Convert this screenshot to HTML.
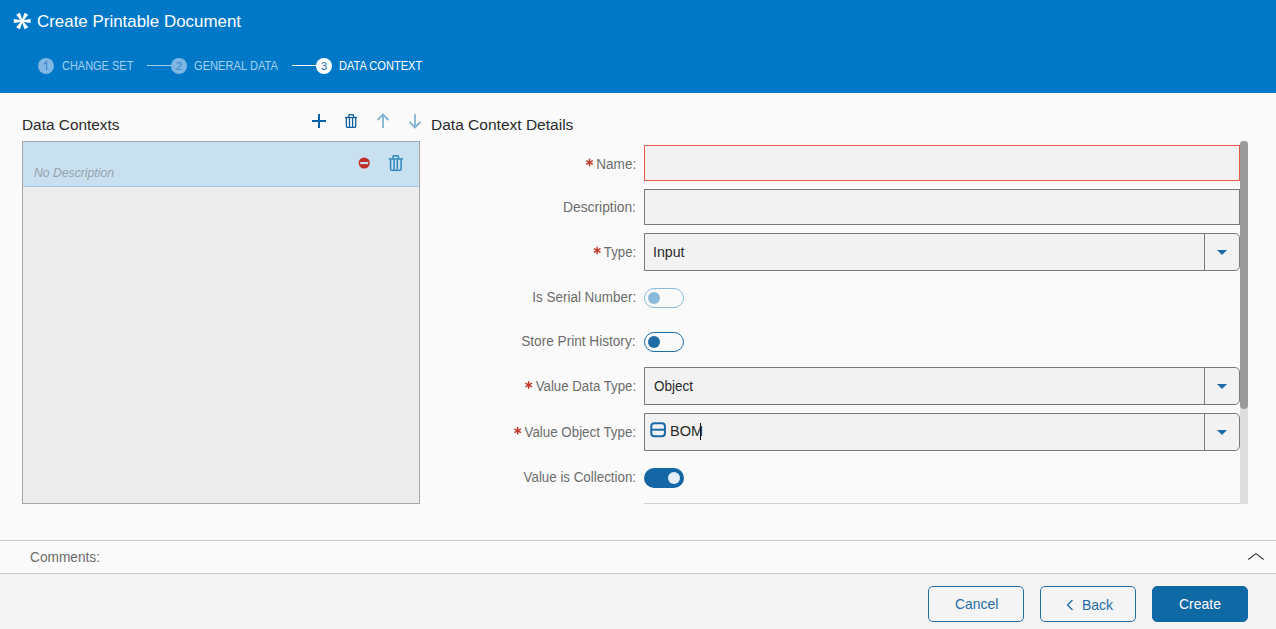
<!DOCTYPE html>
<html><head><meta charset="utf-8">
<style>
*{box-sizing:border-box;margin:0;padding:0}
html,body{width:1276px;height:629px;overflow:hidden;background:#fafafa;font-family:"Liberation Sans",sans-serif}
body{position:relative}
.a{position:absolute}
.t{position:absolute;line-height:1;white-space:nowrap}
.inp{position:absolute;left:644px;width:596px;background:#f2f2f2;border:1px solid #7a7a7a}
.sel{border-radius:0 5px 5px 0}
.ddb{position:absolute;right:0;top:0;bottom:0;width:35px;border-left:1px solid #7a7a7a}
.ddb:after{content:"";position:absolute;left:12px;top:50%;margin-top:-2px;border-left:5px solid transparent;border-right:5px solid transparent;border-top:5px solid #1a6aa8}
.tog{position:absolute;left:644px;width:40px;height:20px;border-radius:10px}
.knob{position:absolute;width:12px;height:12px;border-radius:50%;top:3px}
.btn{position:absolute;top:586px;width:96px;height:36px;border:1px solid #1f6ca6;border-radius:5px}
</style></head><body>
<div class="a" style="left:0;top:0;width:1276px;height:93px;background:#0078c8"></div>
<svg class="a" style="left:0;top:0" width="40" height="40" viewBox="0 0 40 40" fill="#fff">
<polygon points="30.60,23.10 22.20,21.65 13.80,23.10 13.80,18.90 22.20,20.35 30.60,18.90"/>
<polygon points="24.58,29.32 21.64,21.32 16.18,14.78 19.82,12.68 22.76,20.68 28.22,27.22"/>
<polygon points="16.18,27.22 21.64,20.68 24.58,12.68 28.22,14.78 22.76,21.32 19.82,29.32"/>
</svg>
<!-- step indicators -->
<svg class="a" style="left:0;top:50px" width="440" height="30" viewBox="0 50 440 30">
<circle cx="46" cy="66" r="8" fill="#7fb6e3"/>
<line x1="147" y1="65.5" x2="172" y2="65.5" stroke="#a8d0f0" stroke-width="1"/>
<circle cx="179" cy="66" r="8" fill="#7fb6e3"/>
<line x1="292" y1="65.5" x2="317" y2="65.5" stroke="#fff" stroke-width="1"/>
<circle cx="324" cy="66" r="8" fill="#fff"/>
<path d="M46.6 70 V62 L43.9 64.2" fill="none" stroke="#3a87c8" stroke-width="1.1"/>
<text x="179" y="70" font-family="Liberation Sans" font-size="11" fill="#3a87c8" text-anchor="middle">2</text>
<text x="324" y="70" font-family="Liberation Sans" font-size="11" fill="#0a6ab8" text-anchor="middle">3</text>
</svg>

<!-- left list -->
<div class="a" style="left:22px;top:141px;width:398px;height:363px;background:#ececec;border:1px solid #a6a6a6"></div>
<div class="a" style="left:23px;top:142px;width:396px;height:45px;background:#c9e0f0;border-bottom:1px solid #a9c7dc"></div>

<!-- toolbar icons -->
<svg class="a" style="left:300px;top:105px" width="130" height="80" viewBox="300 105 130 80">
<g fill="none" stroke="#0a60a6" stroke-width="2">
<line x1="312" y1="121" x2="326" y2="121"/>
<line x1="319" y1="114" x2="319" y2="128"/>
</g>
<g fill="none" stroke="#0f5fa0" stroke-width="1.3">
<path d="M348.4 117.2 L349.2 114.7 H353.1 L353.9 117.2"/>
<line x1="345" y1="117.5" x2="357" y2="117.5"/>
<path d="M346.4 118 V126.2 Q346.4 127.4 347.6 127.4 H354.5 Q355.7 127.4 355.7 126.2 V118"/>
<line x1="349.5" y1="118" x2="349.5" y2="127"/>
<line x1="352.6" y1="118" x2="352.6" y2="127"/>
</g>
<g fill="none" stroke="#82b2d3" stroke-width="1.8">
<path d="M377.6 120 L383 114.6 L388.4 120"/>
<line x1="383" y1="115" x2="383" y2="128"/>
<path d="M409.6 122 L415 127.4 L420.4 122"/>
<line x1="415" y1="114" x2="415" y2="127"/>
</g>
<circle cx="364.2" cy="163" r="5.6" fill="#c0302a"/>
<rect x="360.2" y="162" width="8" height="2.1" fill="#c9e0f0"/>
<g fill="none" stroke="#3086bf" stroke-width="1.5">
<path d="M392.6 158.6 L393.5 155.8 H397.9 L398.8 158.6"/>
<line x1="388.8" y1="159" x2="403.1" y2="159"/>
<path d="M390.6 159.5 V169 Q390.6 170.2 391.8 170.2 H399.9 Q401.1 170.2 401.1 169 V159.5"/>
<line x1="394.1" y1="159.6" x2="394.1" y2="169.4"/>
<line x1="397.3" y1="159.6" x2="397.3" y2="169.4"/>
</g>
</svg>

<!-- form -->
<div class="inp" style="top:145px;height:36px;border-color:#e8594c"></div>
<div class="inp" style="top:189px;height:36px"></div>
<div class="inp sel" style="top:233px;height:38px"><div class="ddb"></div></div>
<div class="tog" style="top:288px;border:1px solid #8dbad9"><div class="knob" style="left:3px;top:3px;background:#8cb9d7"></div></div>
<div class="tog" style="top:332px;border:1px solid #1f6ca6"><div class="knob" style="left:3px;top:3px;background:#1f6ca6"></div></div>
<div class="inp sel" style="top:367px;height:38px"><div class="ddb"></div></div>
<div class="inp sel" style="top:413px;height:38px"><div class="ddb"></div></div>
<svg class="a" style="left:648px;top:420px" width="20" height="20" viewBox="648 420 20 20">
<rect x="651.3" y="423.2" width="13.6" height="13" rx="3" fill="none" stroke="#1a6aa8" stroke-width="2"/>
<line x1="651.3" y1="429.7" x2="664.9" y2="429.7" stroke="#1a6aa8" stroke-width="2"/>
</svg>
<div class="a" style="left:700px;top:423px;width:1px;height:17px;background:#111"></div>
<div class="tog" style="top:468px;background:#1466a4"><div class="knob" style="left:24px;top:4px;background:#e4eef6"></div></div>
<div class="a" style="left:644px;top:503px;width:596px;height:1px;background:#cfcfcf"></div>
<div class="a" style="left:1240px;top:141px;width:8px;height:363px;background:#dedede"></div>
<div class="a" style="left:1240px;top:141px;width:8px;height:268px;background:#9a9a9a;border-radius:4px"></div>

<!-- comments -->
<div class="a" style="left:0;top:540px;width:1276px;height:1px;background:#cdcdcd"></div>
<div class="a" style="left:0;top:573px;width:1276px;height:1px;background:#c9c9c9"></div>
<svg class="a" style="left:1240px;top:545px" width="30" height="25" viewBox="1240 545 30 25">
<path d="M1248.3 559.5 L1256 553.6 L1263.6 559.5" fill="none" stroke="#333" stroke-width="1.1"/>
</svg>

<!-- footer -->
<div class="a" style="left:0;top:574px;width:1276px;height:55px;background:#f4f4f4"></div>
<div class="btn" style="left:928px"></div>
<div class="btn" style="left:1040px"></div>
<svg class="a" style="left:1060px;top:595px" width="20" height="20" viewBox="1060 595 20 20">
<path d="M1072.5 600 L1067.5 605 L1072.5 610" fill="none" stroke="#1f6ca6" stroke-width="1.3"/>
</svg>
<div class="btn" style="left:1152px;background:#0f69a5;border-color:#0f69a5"></div>
<svg class="a" style="left:0;top:0" width="700" height="500" viewBox="0 0 700 500"><g transform="translate(589.5 162.5)" stroke="#c0392b" stroke-width="1.5" fill="none"><line x1="0" y1="-3.8" x2="0" y2="3.8"/><line x1="-3.3" y1="-1.9" x2="3.3" y2="1.9"/><line x1="-3.3" y1="1.9" x2="3.3" y2="-1.9"/></g><g transform="translate(597.2 250.5)" stroke="#c0392b" stroke-width="1.5" fill="none"><line x1="0" y1="-3.8" x2="0" y2="3.8"/><line x1="-3.3" y1="-1.9" x2="3.3" y2="1.9"/><line x1="-3.3" y1="1.9" x2="3.3" y2="-1.9"/></g><g transform="translate(528.7 385)" stroke="#c0392b" stroke-width="1.5" fill="none"><line x1="0" y1="-3.8" x2="0" y2="3.8"/><line x1="-3.3" y1="-1.9" x2="3.3" y2="1.9"/><line x1="-3.3" y1="1.9" x2="3.3" y2="-1.9"/></g><g transform="translate(517.7 430.7)" stroke="#c0392b" stroke-width="1.5" fill="none"><line x1="0" y1="-3.8" x2="0" y2="3.8"/><line x1="-3.3" y1="-1.9" x2="3.3" y2="1.9"/><line x1="-3.3" y1="1.9" x2="3.3" y2="-1.9"/></g></svg>
<div class="t" style="left:37.00px;top:12.61px;font-size:17px;color:#fff;transform:scaleX(0.9950980392156863);transform-origin:0 0;">Create Printable Document</div>
<div class="t" style="left:62.10px;top:60.42px;font-size:12.5px;color:#a8d0f0;transform:scaleX(0.8777777777777777);transform-origin:0 0;">CHANGE SET</div>
<div class="t" style="left:194.00px;top:60.42px;font-size:12.5px;color:#a8d0f0;transform:scaleX(0.8905263157894739);transform-origin:0 0;">GENERAL DATA</div>
<div class="t" style="left:339.20px;top:60.42px;font-size:12.5px;color:#fff;transform:scaleX(0.8851063829787232);transform-origin:0 0;">DATA CONTEXT</div>
<div class="t" style="left:22.30px;top:117.48px;font-size:15.5px;color:#2a2a2a;transform:scaleX(0.9927835051546392);transform-origin:0 0;">Data Contexts</div>
<div class="t" style="left:431.00px;top:117.48px;font-size:15.5px;color:#2a2a2a;transform:scaleX(1.0014184397163124);transform-origin:0 0;">Data Context Details</div>
<div class="t" style="left:34.00px;top:166.72px;font-size:12.5px;color:#97a3ac;transform:scaleX(0.975609756097561);transform-origin:0 0;font-style:italic">No Description</div>
<div class="t" style="right:640.20px;top:157.15px;font-size:14px;color:#6c6c6c;transform:scaleX(0.9692307692307681);transform-origin:100% 0;">Name:</div>
<div class="t" style="right:640.20px;top:199.65px;font-size:14px;color:#6c6c6c;transform:scaleX(0.9861111111111112);transform-origin:100% 0;">Description:</div>
<div class="t" style="right:640.20px;top:245.15px;font-size:14px;color:#6c6c6c;transform:scaleX(0.9454545454545434);transform-origin:100% 0;">Type:</div>
<div class="t" style="right:640.20px;top:290.15px;font-size:14px;color:#6c6c6c;transform:scaleX(0.9602122641509433);transform-origin:100% 0;">Is Serial Number:</div>
<div class="t" style="right:640.20px;top:334.15px;font-size:14px;color:#6c6c6c;transform:scaleX(0.9722817391304346);transform-origin:100% 0;">Store Print History:</div>
<div class="t" style="right:640.20px;top:378.95px;font-size:14px;color:#6c6c6c;transform:scaleX(0.9466666666666664);transform-origin:100% 0;">Value Data Type:</div>
<div class="t" style="right:640.20px;top:425.15px;font-size:14px;color:#6c6c6c;transform:scaleX(0.9525862068965517);transform-origin:100% 0;">Value Object Type:</div>
<div class="t" style="right:640.20px;top:469.85px;font-size:14px;color:#6c6c6c;transform:scaleX(0.9529914529914529);transform-origin:100% 0;">Value is Collection:</div>
<div class="t" style="left:652.90px;top:245.15px;font-size:14px;color:#2a2a2a;transform:scaleX(1.012903225806451);transform-origin:0 0;">Input</div>
<div class="t" style="left:653.60px;top:379.35px;font-size:14px;color:#2a2a2a;transform:scaleX(0.9650000000000005);transform-origin:0 0;">Object</div>
<div class="t" style="left:669.60px;top:424.35px;font-size:14px;color:#2a2a2a;transform:scaleX(1.039285714285715);transform-origin:0 0;">BOM</div>
<div class="t" style="left:30.40px;top:549.95px;font-size:14px;color:#6c6c6c;transform:scaleX(0.977142857142857);transform-origin:0 0;">Comments:</div>
<div class="t" style="left:954.80px;top:596.00px;font-size:15px;color:#1f6ca6;transform:scaleX(0.9259000000000015);transform-origin:0 0;">Cancel</div>
<div class="t" style="left:1081.90px;top:597.10px;font-size:15px;color:#1f6ca6;transform:scaleX(0.9281249999999943);transform-origin:0 0;">Back</div>
<div class="t" style="left:1179.00px;top:596.20px;font-size:15px;color:#fff;transform:scaleX(0.9335113636363647);transform-origin:0 0;">Create</div>
</body></html>
